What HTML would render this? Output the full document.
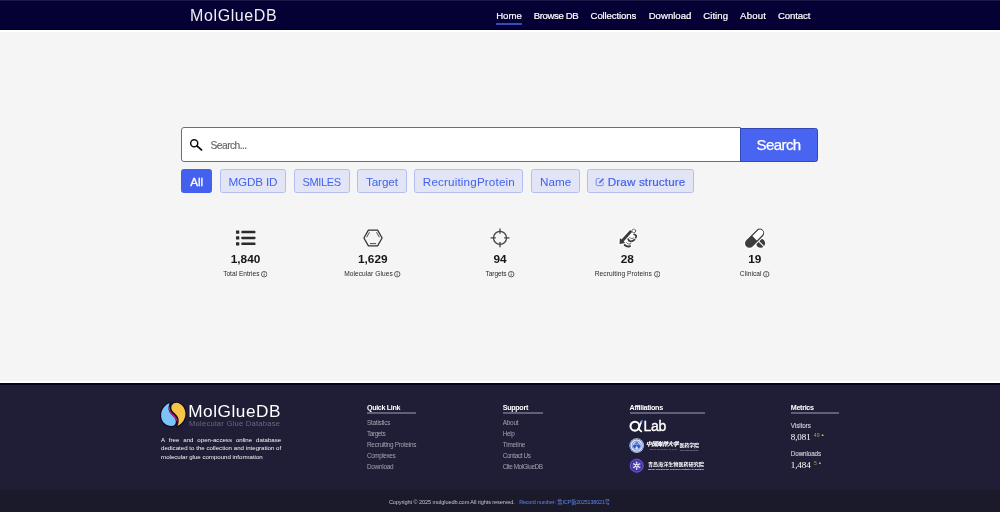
<!DOCTYPE html>
<html lang="en">
<head>
<meta charset="utf-8">
<title>MolGlueDB</title>
<style>
*{box-sizing:border-box;margin:0;padding:0}
html,body{width:1000px;height:512px;overflow:hidden;background:#f5f5f5}
body{position:relative;font-family:"Liberation Sans","Noto Sans CJK SC",sans-serif;color:#222}
#root{position:absolute;left:0;top:0;width:1000px;height:512px;overflow:hidden;will-change:transform;opacity:.999}
.abs{position:absolute;white-space:nowrap;line-height:1}
/* header */
#hdr{position:absolute;left:0;top:0;width:1000px;height:29.700px;background:#060135;border-bottom:1.100px solid #01001a}
#hring{position:absolute;left:0;top:29.700px;width:1000px;height:2px;background:#fff}
#hdr .topline{position:absolute;left:0;top:0;width:1000px;height:1px;background:#1b1a47}
#brand{left:190.1px;top:8.4px;font-size:16px;color:#eeeef6;letter-spacing:.6px}
.nav{top:10.8px;font-size:9.6px;color:#fff;-webkit-text-stroke:.2px #fff}
#homeul{position:absolute;left:496.2px;top:23px;width:25.6px;height:1.5px;background:#364abc}
/* search */
#sbox{position:absolute;left:181.3px;top:127.4px;width:560px;height:34.2px;background:#fff;border:1.4px solid #56719f;border-radius:3px 0 0 3px}
#sbtn{position:absolute;left:740.3px;top:127.5px;width:78.1px;height:34px;background:#4864f0;border:1px solid #3448b4;border-radius:0 2.5px 2.5px 0}
#sbtn span{position:absolute;left:15.2px;top:8.8px;font-size:15px;color:#fff;-webkit-text-stroke:.25px #fff;line-height:1;letter-spacing:-.56px;white-space:nowrap}
#ph{left:210.5px;top:141px;font-size:10.3px;color:#666;-webkit-text-stroke:.15px #666;letter-spacing:-.56px}
.fb{position:absolute;top:169.400px;height:23.800px;border:1px solid #b3beef;background:#e1e5f5;padding-top:.5px;border-radius:2.5px;color:#4361ee;font-size:11.7px;line-height:21.800px;text-align:center;white-space:nowrap}
.fb.on{background:#4361ee;border-color:#4361ee;color:#fff;-webkit-text-stroke:.3px #fff}
/* stats */
.num{top:254.2px;font-size:11.8px;font-weight:bold;color:#161616;text-align:center;width:80px}
.lbl{top:271.2px;font-size:6.6px;color:#2a2a2a;text-align:center;width:120px}
.info{display:inline-block;width:6.400px;height:6.400px;vertical-align:-1.100px;margin-left:1.600px}
/* footer */
#ftr{position:absolute;left:0;top:383.2px;width:1000px;height:130px;background:#201e37}
#ring1{position:absolute;left:0;top:380.8px;width:1000px;height:2.4px;background:#fff}
#ring2{position:absolute;left:0;top:383.2px;width:1000px;height:1.6px;background:#060422}
#bar{position:absolute;left:0;top:489.700px;width:1000px;height:23px;background:#1b1a2b}
.fh{font-size:7.200px;font-weight:bold;color:#fff;top:404px}
.ful{position:absolute;top:412.300px;height:1.500px;background:#605f79}
.fl{font-size:6.400px;color:#a2a2b0}
.para{left:161.100px;width:120.100px;font-size:6.100px;color:#f4f4f8;text-align:justify}
</style>
</head>
<body>
<div id="root">
<div id="hdr"><div class="topline"></div></div>
<div id="hring"></div>
<div id="brand" class="abs">MolGlueDB</div>
<div class="abs nav" style="left:496.2px">Home</div>
<div class="abs nav" style="left:533.8px;letter-spacing:-0.4px">Browse DB</div>
<div class="abs nav" style="left:590.6px;letter-spacing:-0.13px">Collections</div>
<div class="abs nav" style="left:648.7px">Download</div>
<div class="abs nav" style="left:703.2px;letter-spacing:0.07px">Citing</div>
<div class="abs nav" style="left:740.0px;letter-spacing:0.23px">About</div>
<div class="abs nav" style="left:777.9px;letter-spacing:-0.08px">Contact</div>
<div id="homeul"></div>

<div id="sbox"></div>
<svg class="abs" style="left:189px;top:137.600px" width="15" height="14" viewBox="0 0 15 14"><circle cx="5.200" cy="5.200" r="3.550" fill="none" stroke="#111" stroke-width="1.500"/><path d="M7.900 7.900 L12.500 11.900" stroke="#111" stroke-width="1.900" stroke-linecap="round"/></svg>
<div id="ph" class="abs">Search...</div>
<div id="sbtn"><span>Search</span></div>

<div class="fb on" style="left:181.400px;width:30.600px">All</div>
<div class="fb" style="left:219.5px;width:66.8px;letter-spacing:-0.15px">MGDB ID</div>
<div class="fb" style="left:293.5px;width:56.2px;letter-spacing:-0.36px;font-size:11px;padding-top:1.2px">SMILES</div>
<div class="fb" style="left:357px;width:49.8px;letter-spacing:-0.08px">Target</div>
<div class="fb" style="left:414.3px;width:109.2px;letter-spacing:0.146px">RecruitingProtein</div>
<div class="fb" style="left:531.3px;width:48.7px">Name</div>
<div class="fb" style="left:587.4px;width:106.4px;text-align:left;padding-left:19.4px;-webkit-text-stroke:.2px #4763e8;letter-spacing:0.115px">Draw structure</div>
<svg class="abs" style="left:595px;top:176.6px" width="10" height="10" viewBox="0 0 10 10"><path d="M4.6 1.6H2.2a1 1 0 0 0-1 1v5a1 1 0 0 0 1 1h5a1 1 0 0 0 1-1V5.4" fill="none" stroke="#5a74ea" stroke-width=".8"/><path d="M3.800 6.400l.4-1.700 3.600-3.600 1.300 1.300-3.600 3.600z" fill="#5a74ea"/></svg>

<!-- stats -->
<svg class="abs" style="left:235.6px;top:230.2px" width="20" height="16" viewBox="0 0 20 16"><g fill="#2b2b2b"><rect x="0" y="0.4" width="3.3" height="3.3" rx=".4"/><rect x="0" y="6.3" width="3.3" height="3.3" rx=".4"/><rect x="0" y="12.2" width="3.3" height="3.3" rx=".4"/><rect x="5.4" y="0.8" width="14" height="2.5" rx=".6"/><rect x="5.4" y="6.7" width="14" height="2.5" rx=".6"/><rect x="5.4" y="12.6" width="14" height="2.5" rx=".6"/></g></svg>
<div class="abs num" style="left:205.5px">1,840</div>
<div class="abs lbl" style="left:185.3px">Total Entries<svg class="info" viewBox="0 0 12 12"><circle cx="6" cy="6" r="5.200" fill="none" stroke="#2c2c2c" stroke-width="1.350"/><path d="M6 5.200v3.700" stroke="#2c2c2c" stroke-width="1.400"/><circle cx="6" cy="3.200" r=".85" fill="#2c2c2c"/></svg></div>

<svg class="abs" style="left:362.6px;top:228.8px" width="20" height="18" viewBox="0 0 20 18"><path d="M.9 9 5.4 1.1h9.2L19.1 9l-4.5 7.9H5.4z" fill="none" stroke="#333" stroke-width="1.250" stroke-linejoin="round"/><path d="M3.6 8.3 6.5 3.2M13.5 3.2l2.9 5.1M6.9 14.6h6.2" stroke="#3a3a3a" stroke-width=".9" fill="none"/></svg>
<div class="abs num" style="left:332.8px">1,629</div>
<div class="abs lbl" style="left:312.5px;letter-spacing:0.07px">Molecular Glues<svg class="info" viewBox="0 0 12 12"><circle cx="6" cy="6" r="5.200" fill="none" stroke="#2c2c2c" stroke-width="1.350"/><path d="M6 5.200v3.700" stroke="#2c2c2c" stroke-width="1.400"/><circle cx="6" cy="3.200" r=".85" fill="#2c2c2c"/></svg></div>

<svg class="abs" style="left:490px;top:228px" width="20" height="20" viewBox="0 0 20 20"><g fill="none" stroke="#444" stroke-width="1.3"><circle cx="10" cy="9.9" r="6.5"/><path d="M10 .6v5.2M10 14v5.3M.6 9.9h5.2M14.2 9.9h5.3"/></g></svg>
<div class="abs num" style="left:460px">94</div>
<div class="abs lbl" style="left:440px;letter-spacing:-0.08px">Targets<svg class="info" viewBox="0 0 12 12"><circle cx="6" cy="6" r="5.200" fill="none" stroke="#2c2c2c" stroke-width="1.350"/><path d="M6 5.200v3.700" stroke="#2c2c2c" stroke-width="1.400"/><circle cx="6" cy="3.200" r=".85" fill="#2c2c2c"/></svg></div>

<svg class="abs" style="left:617px;top:227.600px" width="22" height="21" viewBox="0 0 22 21"><g stroke="#fff" stroke-width="2.600" stroke-linejoin="round" stroke-linecap="round" fill="#fff"><path d="M15.250 3.720 6.650 13.420 8.300 14.880 2.560 15.950 2.900 10.120 4.550 11.580 13.150 1.880z"/><circle cx="16.800" cy="2.900" r="2.100"/><path d="M16.800 4.500 19 7.500 17.800 11.500 13 18.300 7.400 17 11 11z"/></g><g fill="#3a3a3a"><path d="M15.250 3.720 6.650 13.420 8.300 14.880 2.560 15.950 2.900 10.120 4.550 11.580 13.150 1.880z"/></g><g fill="none" stroke="#3a3a3a" stroke-linecap="round"><circle cx="16.800" cy="2.900" r="1.900" stroke-width=".7"/><path d="M17.200 6.300C19.300 6.700 19.700 8.300 18.700 9.700" stroke-width="1.700"/><path d="M11.300 11.200C11.800 13.600 15 14.300 17.500 11.700" stroke-width="1.800"/><path d="M7.700 17C9.200 18.400 11.400 18.800 13 18.100" stroke-width="1.900"/><path d="M12.800 9.600C13.500 10.800 15.600 11 16.600 9.900M9.600 14.700C10.400 16 12.600 16.500 13.900 15.600" stroke-width=".8"/></g></svg>
<div class="abs num" style="left:587.3px">28</div>
<div class="abs lbl" style="left:567.3px;letter-spacing:0.08px">Recruiting Proteins<svg class="info" viewBox="0 0 12 12"><circle cx="6" cy="6" r="5.200" fill="none" stroke="#2c2c2c" stroke-width="1.350"/><path d="M6 5.200v3.700" stroke="#2c2c2c" stroke-width="1.400"/><circle cx="6" cy="3.200" r=".85" fill="#2c2c2c"/></svg></div>

<svg class="abs" style="left:744px;top:228px" width="23" height="22" viewBox="0 0 23 22"><circle cx="16.600" cy="15.200" r="5.500" fill="#fff"/><circle cx="16.600" cy="15.200" r="4.500" fill="#3d3d3d"/><path d="M12 10.600l9.500 9.500" stroke="#fff" stroke-width="1.100"/><g transform="rotate(-45 10.600 10.200)"><rect x="-2.150" y="4.700" width="25.500" height="11" rx="5.500" fill="#fff"/><rect x="-1.150" y="5.700" width="23.500" height="9" rx="4.500" fill="#3d3d3d"/><path d="M10.600 7.100h7.700a3.100 3.100 0 0 1 0 6.200H10.600z" fill="#fff"/></g></svg>
<div class="abs num" style="left:714.7px">19</div>
<div class="abs lbl" style="left:694.7px;letter-spacing:0.06px">Clinical<svg class="info" viewBox="0 0 12 12"><circle cx="6" cy="6" r="5.200" fill="none" stroke="#2c2c2c" stroke-width="1.350"/><path d="M6 5.200v3.700" stroke="#2c2c2c" stroke-width="1.400"/><circle cx="6" cy="3.200" r=".85" fill="#2c2c2c"/></svg></div>

<!-- footer -->
<div id="ring1"></div>
<div id="ftr"></div>
<div id="ring2"></div>
<div id="bar"></div>

<svg class="abs" style="left:155px;top:397px" width="40" height="35" viewBox="0 0 585 512">
<g stroke="#0c0a24" stroke-width="34" stroke-linejoin="round" fill="#0c0a24"><path d="M215 92C145 108 88 190 90 268c-4 70 42 147 142 157 45 4 75-25 73-70-2-40-35-70-65-98-30-28-45-60-42-100 2-25 8-45 17-65z"/><path d="M240 135c15-35 45-52 75-50 70 5 125 70 130 150 4 75-40 160-118 190 15-30 22-60 18-95-5-40-35-70-65-98-28-26-48-55-40-97z"/></g>
<path d="M215 92C145 108 88 190 90 268c-4 70 42 147 142 157 45 4 75-25 73-70-2-40-35-70-65-98-30-28-45-60-42-100 2-25 8-45 17-65z" fill="#7cc4f8"/>
<path d="M240 135c15-35 45-52 75-50 70 5 125 70 130 150 4 75-40 160-118 190 15-30 22-60 18-95-5-40-35-70-65-98-28-26-48-55-40-97z" fill="#f6c548"/>
<path d="M207 150c-2 45 15 75 45 102 32 29 62 55 72 98" fill="none" stroke="#e8198b" stroke-width="15" stroke-linecap="round"/>
</svg>
<div class="abs" style="left:188.200px;top:402.900px;font-size:17.200px;color:#fff;letter-spacing:.55px">MolGlueDB</div>
<div class="abs" style="left:189px;top:419.800px;font-size:7.600px;color:#676a80;letter-spacing:.24px">Molecular Glue Database</div>
<div class="abs para" style="top:436.800px;text-align-last:justify">A free and open-access online database</div>
<div class="abs para" style="top:445.250px;text-align-last:justify">dedicated to the collection and integration of</div>
<div class="abs para" style="top:453.500px">molecular glue compound information</div>

<div class="abs fh" style="left:367px;letter-spacing:-0.372px">Quick Link</div>
<div class="ful" style="left:367px;width:49.400px"></div>
<div class="abs fl" style="left:367px;top:419.900px;letter-spacing:-0.242px">Statistics</div>
<div class="abs fl" style="left:367px;top:430.700px;letter-spacing:-0.395px">Targets</div>
<div class="abs fl" style="left:367px;top:441.700px;letter-spacing:-0.256px">Recruiting Proteins</div>
<div class="abs fl" style="left:367px;top:452.800px;letter-spacing:-0.421px">Complexes</div>
<div class="abs fl" style="left:367px;top:463.800px;letter-spacing:-0.275px">Download</div>

<div class="abs fh" style="left:502.700px;letter-spacing:-0.324px">Support</div>
<div class="ful" style="left:502.700px;width:40.300px"></div>
<div class="abs fl" style="left:502.700px;top:419.900px;letter-spacing:-0.226px">About</div>
<div class="abs fl" style="left:502.700px;top:430.700px;letter-spacing:-0.319px">Help</div>
<div class="abs fl" style="left:502.700px;top:441.700px;letter-spacing:-0.175px">Timeline</div>
<div class="abs fl" style="left:502.700px;top:452.800px;letter-spacing:-0.369px">Contact Us</div>
<div class="abs fl" style="left:502.700px;top:463.800px;letter-spacing:-0.425px">Cite MolGlueDB</div>

<div class="abs fh" style="left:629.500px;letter-spacing:-0.313px">Affiliations</div>
<div class="ful" style="left:629.500px;width:75.200px"></div>


<svg class="abs" style="left:629px;top:419px" width="14" height="14" viewBox="0 0 14 14"><circle cx="5.900" cy="7.200" r="4.400" fill="none" stroke="#fff" stroke-width="2.100"/><path d="M9.300 10 C10.400 8 11.300 5.400 12.300 2.900" fill="none" stroke="#fff" stroke-width="1.700" stroke-linecap="round"/><path d="M9.200 9.600 L12.300 12.400" stroke="#fff" stroke-width="1.800" stroke-linecap="round"/><path d="M12.100 1.200 L14 1.200 L13.100 3.400 L11.300 3.400z" fill="#4a9af2"/></svg>
<div class="abs" style="left:643.400px;top:418.800px;font-size:14px;color:#fff;letter-spacing:-.25px;-webkit-text-stroke:.35px #fff">Lab</div>

<svg class="abs" style="left:629px;top:437.600px" width="16" height="16" viewBox="0 0 16 16"><circle cx="7.700" cy="7.600" r="7.300" fill="#e9effb"/><circle cx="7.700" cy="7.600" r="6.500" fill="none" stroke="#3a5cc0" stroke-width=".7"/><circle cx="7.700" cy="7.600" r="4.600" fill="#cfdcf6" stroke="#3a5cc0" stroke-width=".6"/><path d="M3.800 8.200c1-2.400 2.400-2.600 3.900-.6 1.500-2 2.900-1.800 3.900.6-1.200 2.600-2.600 2.800-3.900 1-1.300 1.800-2.700 1.600-3.900-1z" fill="#3a5cc0"/><path d="M5.400 5.600l2.300-2.200 2.300 2.200-2.300 1.400z" fill="#5a7ad4"/><circle cx="7.700" cy="9.400" r="1" fill="#e9effb"/></svg>
<div class="abs" style="left:646px;top:442.300px;font-size:5.500px;font-weight:bold;color:#fff;font-family:'Liberation Serif','Noto Serif CJK SC',serif;letter-spacing:-.1px;font-style:italic;-webkit-text-stroke:.3px #fff">中国海洋大学</div>
<div class="abs" style="left:679.400px;top:443.500px;font-size:4.900px;font-weight:bold;color:#fff;letter-spacing:0">医药学院</div>
<div class="abs" style="left:649.600px;top:449.400px;font-size:1.700px;color:#a8a8bc;letter-spacing:.12px">OCEAN UNIVERSITY OF CHINA</div>
<div class="abs" style="left:680px;top:449.500px;font-size:1.500px;color:#a8a8bc;letter-spacing:-.14px">School of Medicine and Pharmacy</div>

<svg class="abs" style="left:629px;top:457.900px" width="16" height="16" viewBox="0 0 16 16"><circle cx="7.700" cy="7.700" r="7.300" fill="#3a2c96"/><circle cx="7.700" cy="7.700" r="6.300" fill="none" stroke="#8f86d6" stroke-width=".6"/><circle cx="7.700" cy="7.700" r="4.700" fill="#5546b8"/><g stroke="#eceafc" stroke-width="1.100" stroke-linecap="round"><path d="M7.700 4v7.400M4.500 5.850l6.400 3.700M4.500 9.550l6.400-3.700"/></g><circle cx="7.700" cy="7.700" r="1.500" fill="#eceafc"/><circle cx="7.700" cy="7.700" r=".7" fill="#3a2c96"/></svg>
<div class="abs" style="left:647.900px;top:461.600px;font-size:5.100px;font-weight:bold;color:#fff;letter-spacing:0">青岛海洋生物医药研究院</div>
<div class="abs" style="left:647.900px;top:467.600px;font-size:2.300px;font-weight:bold;color:#e0e0ec;letter-spacing:.055px">Marine Biomedical Research Institute of Qingdao</div>
<div class="abs fh" style="left:790.800px;letter-spacing:-0.329px">Metrics</div>
<div class="ful" style="left:790.800px;width:47.800px"></div>
<div class="abs" style="left:790.800px;top:423.100px;font-size:6.300px;color:#cfcfd8;-webkit-text-stroke:.12px #cfcfd8;letter-spacing:-.05px">Visitors</div>
<div class="abs" style="left:790.700px;top:432.900px;font-size:9px;color:#fff;font-family:'Liberation Serif',serif;letter-spacing:-0.062px">8,081</div>
<div class="abs" style="left:813.800px;top:433.200px;font-size:5.200px;color:#74b83a">49</div>
<div class="abs" style="left:820.700px;top:433.600px;font-size:3.800px;color:#8fd64a">&#9650;</div>
<div class="abs" style="left:790.800px;top:451px;font-size:6.300px;color:#cfcfd8;-webkit-text-stroke:.12px #cfcfd8;letter-spacing:-.1px">Downloads</div>
<div class="abs" style="left:790.700px;top:461.300px;font-size:9px;color:#fff;font-family:'Liberation Serif',serif;letter-spacing:-0.062px">1,484</div>
<div class="abs" style="left:814px;top:461.100px;font-size:5.200px;color:#74b83a">5</div>
<div class="abs" style="left:818.100px;top:461.500px;font-size:3.800px;color:#8fd64a">&#9650;</div>

<div class="abs" style="left:388.900px;top:500.100px;font-size:5.600px;color:#c3c3cc;letter-spacing:-.093px">Copyright &copy; 2025 molgluedb.com All rights reserved.</div>
<div class="abs" style="left:519.200px;top:500.200px;font-size:5.400px;color:#5a86ec;letter-spacing:-.145px">Record number: 鲁ICP备2025138021号</div>
</div>
</body>
</html>
